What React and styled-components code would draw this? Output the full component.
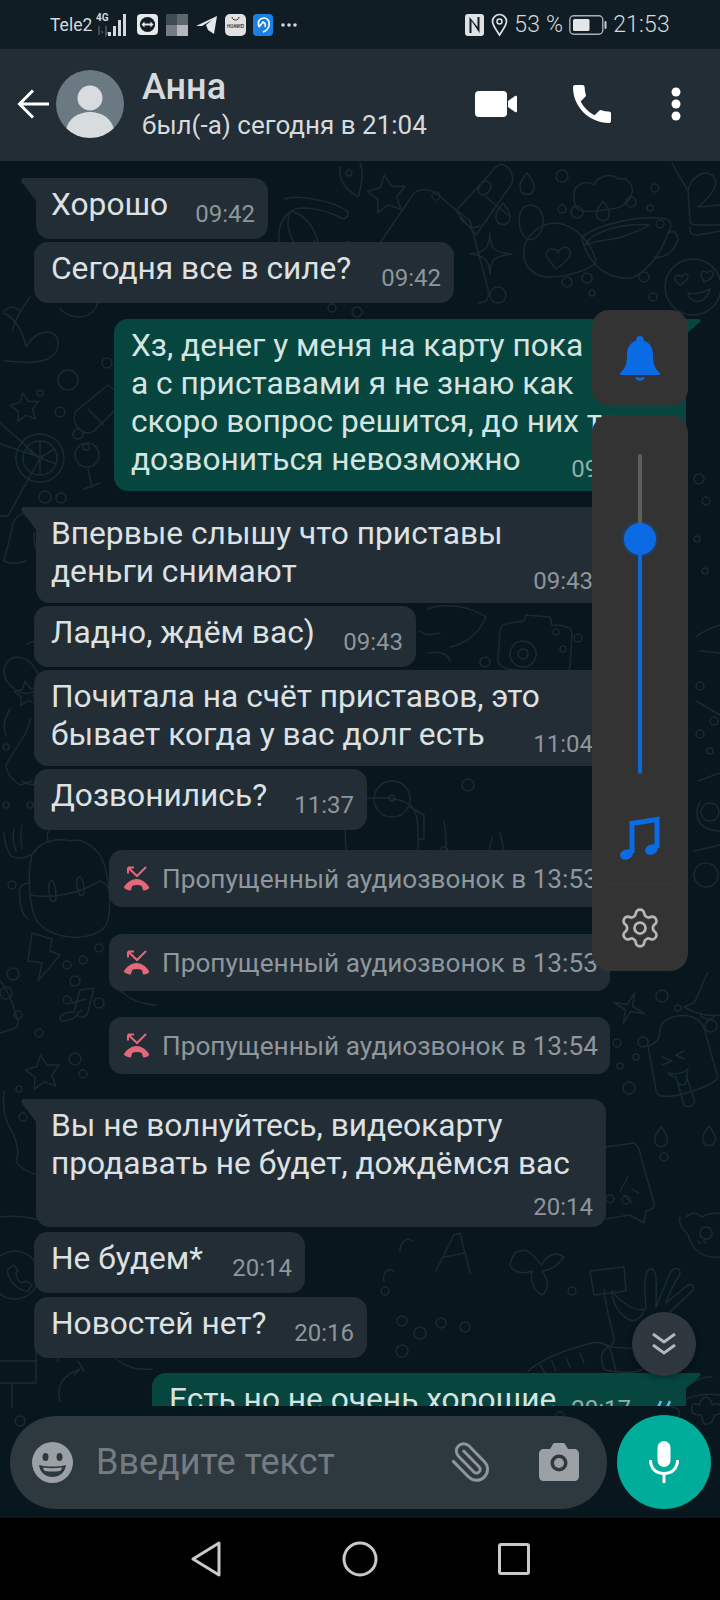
import React from 'react';
import styled, { createGlobalStyle } from 'styled-components';
import { Settings, Paperclip } from 'lucide-react';

const Global = createGlobalStyle`
	html, body {
		margin: 0;
		padding: 0;
		background: #000;
	}
	body {
		font-family: Roboto, "Noto Sans", sans-serif;
	}
`;

const Screen = styled.div`
	display: flex;
	flex-direction: column;
	width: 720px;
	height: 1600px;
	overflow: hidden;
`;

const StatusBar = styled.div`
	display: flex;
	align-items: center;
	justify-content: space-between;
	box-sizing: border-box;
	height: 49px;
	padding: 0 50px;
	background: #111d24;
	color: #d5d9db;
`;

const StatusGroup = styled.div`
	display: flex;
	align-items: center;
	gap: ${ props => props.$gap || 7 }px;
`;

const Carrier = styled.span`
	font-size: 17.5px;
	margin-right: -3px;
`;

const StatusText = styled.span`
	font-size: ${ props => props.$size || 23 }px;
	font-weight: 300;
	letter-spacing: 0.2px;
`;

const Mosaic = styled.div`
	display: grid;
	grid-template-columns: 1fr 1fr;
	width: 22px;
	height: 22px;
	margin: 0 1px;
`;

const MosaicCell = styled.div`
	background: ${ props => props.$color };
`;

const Header = styled.div`
	display: flex;
	align-items: center;
	box-sizing: border-box;
	height: 112px;
	padding: 0 0 2px 17px;
	background: #222d35;
	position: relative;
	z-index: 2;
`;

const Avatar = styled.div`
	flex: none;
	width: 68px;
	height: 68px;
	margin-left: 7px;
	border-radius: 50%;
	overflow: hidden;
`;

const Contact = styled.div`
	display: flex;
	flex-direction: column;
	gap: 4px;
	margin-left: 18px;
	flex: 1;
`;

const Name = styled.div`
	font-size: 36px;
	line-height: 38px;
	font-weight: 500;
	color: #d7dadc;
`;

const LastSeen = styled.div`
	font-size: 26px;
	line-height: 30px;
	color: #d7dadc;
`;

const HeaderActions = styled.div`
	display: flex;
	align-items: center;
	margin-right: 39px;
`;

const Chat = styled.div`
	position: relative;
	flex: 1;
	display: flex;
	flex-direction: column;
	min-height: 0;
	background: #08161e;
`;

const Wallpaper = styled.svg`
	position: absolute;
	left: 0;
	top: 0;
	fill: none;
	stroke: #1a2a33;
	stroke-width: 1.5;
	stroke-linecap: round;
	stroke-linejoin: round;
`;

const Messages = styled.div`
	position: relative;
	display: flex;
	flex-direction: column;
	box-sizing: border-box;
	height: 1246px;
	padding-top: 17px;
	overflow: hidden;
`;

const Bubble = styled.div`
	position: relative;
	flex: none;
	display: flow-root;
	box-sizing: border-box;
	width: ${ props => props.$width }px;
	min-height: 61px;
	margin-top: ${ props => props.$gap || 0 }px;
	margin-left: ${ props => props.$out ? 720 - 34 - props.$width : props.$tail ? 36 : 34 }px;
	padding: 8px ${ props => props.$out ? 15 : 13 }px 11px ${ props => props.$out || !props.$tail ? 17 : 15 }px;
	border-radius: ${ props => props.$tail ? '0 14px 14px 14px' : '14px' };
	border-top-right-radius: ${ props => props.$out ? 0 : '14px' };
	background: ${ props => props.$out ? '#07453f' : '#222d35' };
	color: ${ props => props.$out ? '#d6e4e1' : '#dde1e3' };
	font-size: 31.7px;
	line-height: 38px;

	&::before {
		content: '';
		display: ${ props => props.$tail || props.$out ? 'block' : 'none' };
		position: absolute;
		top: 0;
		width: 16px;
		left: ${ props => props.$out ? 'auto' : '-15px' };
		right: ${ props => props.$out ? '-15px' : 'auto' };
		height: ${ props => props.$out ? 16 : 24 }px;
		background: inherit;
		clip-path: ${ props => props.$out
			? 'polygon(0 0, 90% 0, 100% 14%, 0 100%)'
			: 'polygon(8% 0, 100% 0, 100% 100%, 0 14%)' };
	}
`;

const Time = styled.span`
	float: right;
	clear: ${ props => props.$ownLine ? 'both' : 'none' };
	display: flex;
	align-items: center;
	gap: 20px;
	margin: ${ props => props.$ownLine ? 11 : 15 }px 0 ${ props => props.$ownLine ? -4 : -2 }px 0;
	font-size: 24px;
	line-height: 26px;
	color: ${ props => props.$out ? '#8fb0ab' : '#8e969b' };
`;

const CallNotice = styled.div`
	flex: none;
	display: flex;
	align-items: center;
	gap: 12px;
	box-sizing: border-box;
	width: 501px;
	height: 57px;
	margin: ${ props => props.$gap }px 0 0 109px;
	padding-left: 14px;
	border-radius: 13px;
	background: #222d35;
	color: #8f979c;
	font-size: 26.2px;
`;

const Composer = styled.div`
	display: flex;
	align-items: center;
	gap: 10px;
	position: relative;
	margin: 9px 9px 9px 10px;
`;

const InputPill = styled.div`
	flex: 1;
	display: flex;
	align-items: center;
	box-sizing: border-box;
	height: 93px;
	padding: 0 28px 0 22px;
	border-radius: 47px;
	background: #2e383f;
`;

const Placeholder = styled.div`
	flex: 1;
	margin-left: 23px;
	font-size: 36px;
	color: #747c81;
`;

const ClipIcon = styled(Paperclip)`
	transform: scaleX(-1);
	margin-right: 46px;
`;

const MicButton = styled.div`
	flex: none;
	display: flex;
	align-items: center;
	justify-content: center;
	width: 94px;
	height: 94px;
	border-radius: 50%;
	background: #00ad9b;
`;

const NavBar = styled.div`
	display: flex;
	align-items: center;
	justify-content: center;
	gap: 120px;
	flex: none;
	height: 82px;
	padding-bottom: 0;
	background: #000;
`;

const VolumePanel = styled.div`
	position: absolute;
	left: 592px;
	top: 149px;
	display: flex;
	flex-direction: column;
	gap: 9px;
	width: 96px;
`;

const BellCard = styled.div`
	display: flex;
	align-items: center;
	justify-content: center;
	height: 96px;
	border-radius: 17px;
	background: #333333;
`;

const SliderCard = styled.div`
	display: flex;
	flex-direction: column;
	align-items: center;
	box-sizing: border-box;
	height: 556px;
	padding-top: 39px;
	border-radius: 18px;
	background: #333333;
`;

const SliderTrack = styled.div`
	position: relative;
	width: 4px;
	height: 320px;
	border-radius: 2px;
	background: linear-gradient(#5e5e5e 0 85px, #0f67d8 85px);
`;

const SliderThumb = styled.div`
	position: absolute;
	left: -14px;
	top: 69px;
	width: 32px;
	height: 32px;
	border-radius: 50%;
	background: #0a6be4;
	box-shadow: 0 0 4px rgba(10, 107, 228, 0.6);
`;

const SoundRow = styled.div`
	display: flex;
	justify-content: center;
	margin-top: 41px;
	width: 100%;
`;

const Divider = styled.div`
	width: 64px;
	height: 1px;
	margin-top: 22px;
	background: #383838;
`;

const SettingsRow = styled.div`
	display: flex;
	justify-content: center;
	margin-top: 22px;
`;

const ScrollDown = styled.div`
	position: absolute;
	left: 632px;
	top: 1151px;
	display: flex;
	align-items: center;
	justify-content: center;
	width: 64px;
	height: 64px;
	border-radius: 50%;
	background: #2e373e;
	box-shadow: 0 2px 6px rgba(0, 0, 0, 0.35);
`;

const rings = [
	[ 562, 15, 6 ], [ 436, 35, 4 ], [ 562, 48, 4 ], [ 577, 51, 6 ], [ 631, 41, 5 ], [ 655, 27, 4 ], [ 650, 47, 3 ], [ 660, 63, 4 ],
	[ 567, 121, 5 ], [ 587, 117, 5 ], [ 644, 116, 5 ], [ 592, 132, 3 ], [ 653, 136, 4 ], [ 498, 134, 8 ], [ 332, 147, 4 ], [ 357, 151, 5 ],
	[ 68, 219, 10 ], [ 40, 232, 3 ], [ 60, 251, 5 ], [ 78, 273, 5 ], [ 45, 336, 6 ], [ 61, 337, 5 ], [ 107, 202, 5 ],
	[ 6, 586, 3 ], [ 6, 644, 3 ], [ 30, 644, 3 ], [ 12, 724, 4 ], [ 99, 787, 4 ], [ 13, 813, 6 ], [ 6, 832, 6 ], [ 67, 804, 4 ], [ 83, 799, 4 ],
	[ 75, 820, 5 ], [ 67, 839, 4 ], [ 99, 842, 5 ], [ 18, 854, 4 ], [ 39, 872, 4 ], [ 75, 898, 6 ], [ 83, 913, 4 ], [ 19, 928, 3 ], [ 23, 956, 4 ],
	[ 662, 835, 6 ], [ 678, 847, 3 ], [ 711, 865, 6 ], [ 617, 882, 4 ], [ 643, 881, 5 ], [ 636, 896, 3 ], [ 620, 905, 3 ], [ 629, 927, 6 ],
	[ 664, 996, 4 ], [ 610, 1038, 4 ], [ 626, 1039, 4 ], [ 485, 501, 5 ], [ 578, 477, 4 ], [ 563, 488, 3 ], [ 468, 624, 6 ],
	[ 699, 318, 5 ], [ 706, 340, 4 ], [ 697, 378, 3 ], [ 705, 410, 3 ], [ 700, 525, 4 ], [ 714, 560, 4 ], [ 700, 573, 4 ], [ 710, 590, 3 ],
	[ 385, 1130, 4 ], [ 420, 1172, 6 ], [ 441, 1162, 5 ], [ 402, 1160, 5 ], [ 465, 1166, 5 ], [ 572, 1130, 4 ], [ 402, 1190, 6 ],
	[ 110, 1175, 4 ], [ 622, 688, 4 ], [ 444, 690, 4 ], [ 520, 695, 3 ], [ 20, 1260, 5 ], [ 560, 1255, 4 ],
];

const star = ( cx, cy, r, inner = 0.5, n = 5, rot = -8 ) => {
	const pts = [];
	for ( let i = 0; i < n * 2; i++ ) {
		const a = ( rot - 90 + i * 180 / n ) * Math.PI / 180;
		const d = i % 2 ? r * inner : r;
		pts.push( `${ ( cx + d * Math.cos( a ) ).toFixed( 1 ) },${ ( cy + d * Math.sin( a ) ).toFixed( 1 ) }` );
	}
	return pts.join( ' ' );
};

const drop = ( x, y, h = 22 ) => `M${ x } ${ y }c${ h * .3 } ${ h * .4 } ${ h * .36 } ${ h * .55 } ${ h * .3 } ${ h * .75 }c-${ h * .08 } ${ h * .3 }-${ h * .52 } ${ h * .3 }-${ h * .6 } 0c-${ h * .06 }-${ h * .2 } 0-${ h * .35 } ${ h * .3 }-${ h * .75 }z`;

const doodles = [
	// sunglasses
	'M285 38c10-4 45 0 62 12 3 5-2 9-6 7-18-10-40-12-48-8-8 3-7 30 8 38 8 4 12 0 14-8M292 50c-10 5-16 20-12 32 6 14 30 26 38 14 4-12-4-38-26-46zM346 85c0-7 8-5 8 3 0 14-2 30-6 44M318 96c10 8 18 18 22 36',
	// pin
	'M340 6c-2 14 6 22 18 30 4-12 6-24 2-34M349 9a3 3 0 1 0 .1 0',
	// envelope behind second bubble
	'M380 82l34-50c8-6 16-4 24 2l32 26M470 60l18 68c2 10-2 14-10 14',
	// bottle
	'M456 50l40-44c6-6 14 0 16 8 2 6 0 10-4 14l-32 46-20-24zM460 52c-4 6 14 20 20 12M486 36l22 18M480 24c4-6 8-4 10-2 2 4 0 10-6 12-6 0-7-5-4-10z',
	drop( 527, 12, 22 ), drop( 503, 42, 22 ), drop( 603, 40, 20 ),
	'M530 44c10 0 16 12 12 24-4 10-14 16-20 4-6-12-2-28 8-28z',
	// cloud
	'M574 36c-2-12 12-18 20-12 4-10 18-12 24-6 8-2 16 4 14 14-2 10-12 16-22 16-12 2-28 4-32 0-4-2-4-8-4-12z',
	// coffee cup
	'M582 76c18-14 60-22 84-18 6 2 6 8 2 14-6 18-18 36-34 44-12 4-30-2-40-14-6-8-12-18-12-26zM585 84c14-6 30-4 42-10 10-4 18-6 22-10M585 84c8-16 44-22 64-20M668 72c8-4 12 4 8 12-4 8-14 14-22 12',
	// star 4
	'M490 72c0 14 2 20 22 21-18 2-22 6-22 20-1-14-4-18-20-20 16-1 19-7 20-21z',
	// bubble with heart
	'M556 62c-16 0-30 12-32 26-2 14 6 26 22 28 16 1 42-6 50-14-2-16-18-38-40-40zM550 100c-6-6-4-12 2-12 4 0 6 2 6 4 2-6 10-8 12-2 2 6-8 14-14 18-2-2-4-6-6-8z',
	// emoji
	'M693 98a28 28 0 1 0 .1 0M676 120c-4-4 2-8 6-4 1-4 6-4 6 0 0 4-6 6-8 8zM702 116c-3-4 2-8 5-4 2-4 7-2 6 2-1 4-6 6-9 7zM688 132c6 2 14 0 22-4-2 8-8 14-14 12-4 0-8-4-8-8z',
	// digit block
	'M672 2c4 8 12 20 16 28l2 30c0 4 4 4 10 4h20M688 30c4-20 26-24 28-8 0 6-10 18-18 24l22-2M690 66c0 8 2 8 8 8l22-4',
	// cherry heart left
	'M4 200c14 0 30 4 44-2 14-8 12-22 4-26-10-4-20 4-26 14-4-20-14-30-22-34M20 150c-6-6-12-4-16 0M60 148c10 10 28 12 36-2 6-10-4-26-14-30M58 128c6-2 20 0 16 10M12 170c4-14 12-26 18-34',
	// lemon + drink
	'M40 273a24 24 0 1 1-.1 0zM40 280a17 17 0 1 1-.1 0zM40 297l0 -17M40 297l14 -9M40 297l16 6M40 297l0 17M40 297l-14 -9M0 262l40 35-32 58H0M-2 282l44 15',
	star( 25, 247, 15 ),
	// wine glass
	'M87 282a12 12 0 1 0 .1 0zM86 283a3 3 0 1 0 .1 0zM88 308l4 18M84 328l16-6',
	// bottle top
	'M76 250l32-26 18 14-32 32c-6 4-12 2-18-6-2-4-2-10 0-14zM88 248l16 16',
	// leaf + hand shapes left side
	'M12 368c0-10 8-16 16-16l16 4c6 0 4 6 0 8M12 368l-8 32c8 4 16 2 22 0M34 372c0 6 0 14 4 20M18 496c-8 0-14 6-14 14 0 10 8 18 18 22 10 2 18-4 16-10 2-10-6-24-20-26zM26 484c8-6 14-4 18 2M10 548c-6 10-8 18-4 26M30 558c-2 16-16 30-24 46 0 10 8 16 14 20l12-4M22 620c10 6 22 4 30 0',
	star( 27, 533, 13 ),
	// backpack
	'M32 694c-4 14-4 40 2 60 4 12 18 20 36 22 16 2 34-4 38-16 4-22 0-52-8-66-8-10-20-18-30-14-16-4-32 2-38 14zM30 734c24 4 50-2 70-14M52 720c-4 0 -4 8 -2 16 0 6 6 6 6 0 0-8-2-16-4-16zM80 716c-4 0-4 8-2 14 2 6 6 6 6 0 0-8-2-14-4-14zM30 722c-8 0-12 4-10 14 0 8 2 18 8 22M100 720c6 2 10 6 10 14M48 680c-4-12 8-18 16-14M4 672c0 8 4 18 6 22 8 6 20 2 26-4M14 668c-2 10 0 16 2 22M22 664c-2 8-1 16 0 24',
	// bolt + note + star
	'M32 772l20 6-2 12 10 4-22 26 4-18-14-2z',
	'M78 852c-2 6-10 8-16 8-4-2-2-6 4-8l8-1 6-22 14-2-6 24c-2 6-8 6-10 4-2-2 0-4 4-6M72 842l14-4',
	star( 43, 912, 18 ),
	'M0 820c6 6 12 20 18 40 0 6-2 8-6 8l-12 4M4 930c-2 20 2 32 8 40 4 8 8 22 4 30 4 8 14 12 22 14M0 1056c14-2 30 0 44 4',
	// whatsapp ring
	'M15 1090a24 24 0 1 1-.1 0M8 1108c-2 8 8 22 20 22l4-6-6-4-4 2c-4-2-6-6-6-10l2-2-4-6z',
	// popsicle
	'M648 885c8-2 12-8 12-14 0-10 6-12 10-14 18-6 30 0 34 10l14 50c-6 8-40 20-56 18-4 0-6-4-6-6zM676 916l8 28c6 4 12 0 10-6l-8-24M662 896l10 4-10 4M684 890l-8 4 8 4M668 912c8 2 16 0 20-4-2 6 0 14-4 16-4 0-8-2-8-8-4 0-6-2-8-4',
	drop( 661, 966, 20 ), drop( 709, 965, 20 ),
	// rocket near right of bubble
	'M606 986l28-4c6 4 6 10 8 18l12 42c2 6-4 6-8 8l-2 12-14-8-24 4M624 1034l8 8M632 1028l6 4M620 1030l8-14',
	star( 629, 847, 16, 0.25, 4, 20 ),
	// bell upper right
	'M708 812c-4 4-8 20-14 30l-10 4c10 6 24 10 36 8M700 852c2 6 8 8 14 4',
	// bear
	'M680 1056c-2 10 6 14 8 18 4 14 14 24 32 22M686 1056c6-6 12-4 16 0 6-4 12-4 18-4M706 1066a6 6 0 1 0 .1 0zM698 1080l2 2M704 1080l2 2',
	// hand
	'M604 1128c2 20 8 40 10 50 0 6-4 8-6 6M610 1186c-6 2-10 6-8 14 0 6 2 10 8 10 14 2 30 2 36-4 4-6 0-16-6-18l-30-2zM640 1188c14-24 38-44 52-58 4-4 0-8-4-6l-22 18c4-14 12-24 14-30 0-6-6-6-10 0-4 10-10 24-14 34 0-18 2-36-4-38-8-2-8 16-6 40M612 1130c6 8 22 22 32 18-2 10-10 14-16 10-8-4-16-16-16-28z',
	// gamepad
	'M668 1240c12-10 30-26 44-24M692 1246c-2 8 6 8 10 8 0 6 2 12 8 8 4-2 4-6 4-8 6 0 10-4 6-10-2-2-4-2-8 0 0-6-6-10-10-6-2 2-2 4-2 6-4-2-8-2-8 2z',
	// tag digits, bottom
	'M528 1210c14-12 40-22 64-28 12-2 18 4 20 12l4 16M540 1204l6 10M552 1200l4 10M566 1196l4 10M580 1192l4 10',
	'M620 1228c14-2 26 6 34 14 8 4 18 2 24 6 4 8-4 14-14 14M686 1238c10-4 20-6 34-4',
	// camera
	'M500 470c2-6 4-8 10-8l14-2 2-6 24 2 2 8c12 0 20 2 20 8l-2 34c-2 6-4 8-10 8l-52-6c-6-2-10-4-10-10zM523 480a13 13 0 1 0 .1 0zM523 488a5 5 0 1 0 .1 0zM556 468a3 3 0 1 0 .1 0',
	// turntable
	'M350 640c18-4 46-6 60 4 12 8 8 50 6 60-4 10-50 10-60 6-12-6-14-50-6-70zM392 620a18 18 0 1 0 .1 0M392 634a3 3 0 1 0 .1 0zM410 646l14 8v24l-6 0',
	// shoes / plectrum near 09:43
	'M428 448c14-6 40-4 58 8-6 14-18 26-36 30M420 470c4 4 12 4 20 2M428 492c10-2 20 0 22 8M444 660c4 18 0 34 4 50 2 12 16 20 32 16M500 672c4 16 8 30 2 40M492 676c-4 18-4 36 0 48',
	// right edge shapes
	'M696 476c6-6 24-12 24-12M700 490l20 2M696 540c8 4 16 10 24 14M698 620l22-8M700 640c-8 16 0 30 20 30M710 642a9 9 0 1 0 .1 0zM694 690l26-6M706 702a12 12 0 1 0 .1 0z',
	// letters + shapes, middle bottom
	'M436 1110l18 -36 6 -2 10 40M444 1096l20 -4M520 1090c10-4 16 10 22 14 4-10 14-14 22-8-6 8-14 14-22 14 6 8 8 18 0 24-8-4-12-14-10-24-10 4-20 0-22-6 2-10 6-14 10-14zM400 1090c0-10 8-14 12-10M384 1120c-2-8 4-14 10-10M590 1110l34-4 2 24-32 4z',
	// lines right of Дозвонились
	'M372 800c14-8 30-12 52-4M372 822c22 4 44 0 70-8M476 810l44 4M478 826l44-4',
	'M150 800c0 6 2 12 6 16M120 830c10 8 22 14 36 14',
	// left-bottom checker
	'M0 1200h36v22h-36M36 1200v-22h22v22M12 1222v24M60 1240c-4-14 2-26 20-32l-6 6M78 1200l6 10',
	'M120 1176l30 4M108 1188c8 14 24 22 44 20',
];

const Doodles = () => (
	<Wallpaper width="720" height="1357" viewBox="0 0 720 1357">
		{ doodles.map( ( d, i ) => d.startsWith( 'M' )
			? <path key={ i } d={ d } />
			: <polygon key={ i } points={ d } /> ) }
		<polygon points={ star( 387, 34, 20 ) } />
		{ rings.map( ( [ x, y, r ], i ) => <circle key={ i } cx={ x } cy={ y } r={ r } /> ) }
	</Wallpaper>
);

const Signal = () => (
	<svg width="34" height="28" viewBox="0 0 34 28">
		<text x="0" y="10" fontFamily="Roboto" fontWeight="700" fontSize="10" fill="#d5d9db">4G</text>
		<path d="M3 15v9M7 22l-2-2M10 15v9l2-3" stroke="#4d585e" strokeWidth="1.5" fill="none" />
		<rect x="12" y="21" width="3" height="4" fill="#d5d9db" />
		<rect x="17" y="15" width="3" height="10" fill="#d5d9db" />
		<rect x="22" y="9" width="3" height="16" fill="#d5d9db" />
		<rect x="27" y="3" width="3" height="22" fill="#d5d9db" />
	</svg>
);

const TeamViewer = () => (
	<svg width="21" height="21" viewBox="0 0 21 21">
		<rect width="21" height="21" rx="4" fill="#e6e8e9" />
		<circle cx="10.5" cy="10.5" r="7.6" fill="#111d24" />
		<path d="M4.5 10.5l3-3v2h6v-2l3 3-3 3v-2h-6v2z" fill="#e6e8e9" />
	</svg>
);

const Telegram = () => (
	<svg width="22" height="20" viewBox="0 0 22 20">
		<path d="M0 11L21 1l-3 18-6-4-2-5 6-5-10 6z" fill="#e6e8e9" />
	</svg>
);

const HuaweiBag = () => (
	<svg width="21" height="22" viewBox="0 0 21 22">
		<rect width="21" height="22" rx="5" fill="#dfe1e2" />
		<path d="M7 3c0 4 7 4 7 0" stroke="#333" fill="none" />
		<text x="10.5" y="14" textAnchor="middle" fontFamily="Roboto" fontWeight="700" fontSize="4.6" fill="#444">HUAWEI</text>
	</svg>
);

const BlueApp = () => (
	<svg width="20" height="22" viewBox="0 0 20 22">
		<rect width="20" height="22" rx="4" fill="#1b80e4" />
		<path d="M6 13c-2-6 1-9 5-9 4 0 6 4 5 8-1 3-3 5-6 6M6 13l4-5c2 1 3 3 2 5" stroke="#fff" strokeWidth="1.6" fill="none" />
	</svg>
);

const Dots = () => (
	<svg width="18" height="6" viewBox="0 0 18 6">
		<circle cx="3" cy="3" r="1.8" fill="#d5d9db" />
		<circle cx="9" cy="3" r="1.8" fill="#d5d9db" />
		<circle cx="15" cy="3" r="1.8" fill="#d5d9db" />
	</svg>
);

const Nfc = () => (
	<svg width="21" height="24" viewBox="0 0 21 24">
		<rect x="1" y="1" width="19" height="22" rx="3" fill="#dfe2e3" />
		<path d="M5.500 4v16h2V8l8 12V4h-2v10z" fill="#111d24" />
	</svg>
);

const Pin = () => (
	<svg width="17" height="24" viewBox="0 0 17 24">
		<path d="M8.5 22C4 15 1.5 12 1.5 8.5a7 7 0 0 1 14 0C15.500 12 13 15 8.500 22z" stroke="#dfe2e3" strokeWidth="1.7" fill="none" />
		<circle cx="8.500" cy="8.500" r="2.500" stroke="#dfe2e3" strokeWidth="1.500" fill="none" />
	</svg>
);

const Battery = () => (
	<svg width="38" height="20" viewBox="0 0 38 20">
		<rect x="0.800" y="0.800" width="33" height="18.400" rx="4" stroke="#aab0b3" strokeWidth="1.400" fill="none" />
		<rect x="4" y="4" width="16.500" height="12" rx="1.500" fill="#e4e6e7" />
		<rect x="35.500" y="6" width="2" height="8" rx="1" fill="#c7cbcd" />
	</svg>
);

const BackArrow = () => (
	<svg width="32" height="30" viewBox="0 0 32 30">
		<path d="M32 15H3M16 1.500L2.500 15 16 28.500" stroke="#fff" strokeWidth="3" fill="none" />
	</svg>
);

const AvatarImage = () => (
	<svg width="68" height="68" viewBox="0 0 68 68">
		<rect width="68" height="68" fill="#6b7a82" />
		<circle cx="34" cy="28" r="12.500" fill="#d8dcde" />
		<path d="M10 60c2-12 13-18 24-18s22 6 24 18c-6 5-15 8-24 8s-18-3-24-8z" fill="#d8dcde" />
	</svg>
);

const VideoIcon = () => (
	<svg width="42" height="26" viewBox="0 0 42 26">
		<rect x="0" y="0" width="32" height="26" rx="4" fill="#fff" />
		<path d="M33 10l7-5c1-.6 2 0 2 1v14c0 1-1 1.600-2 1l-7-5z" fill="#fff" />
	</svg>
);

const PhoneIcon = () => (
	<svg width="38" height="38" viewBox="3 3 18 18">
		<path d="M6.620 10.790c1.440 2.830 3.760 5.140 6.590 6.590l2.200-2.200c.27-.27.67-.36 1.020-.24 1.120.37 2.330.57 3.570.57.55 0 1 .45 1 1V20c0 .55-.45 1-1 1-9.390 0-17-7.610-17-17 0-.55.45-1 1-1h3.500c.55 0 1 .45 1 1 0 1.250.2 2.450.57 3.570.11.35.03.74-.25 1.020l-2.200 2.200z" fill="#fff" />
	</svg>
);

const MoreIcon = () => (
	<svg width="10" height="34" viewBox="0 0 10 34">
		<circle cx="5" cy="5" r="4.500" fill="#fff" />
		<circle cx="5" cy="17" r="4.500" fill="#fff" />
		<circle cx="5" cy="29" r="4.500" fill="#fff" />
	</svg>
);

const Spacer = styled.div`
	width: ${ props => props.$width }px;
`;

const MissedIcon = () => (
	<svg width="27" height="26" viewBox="0 0 27 26">
		<path d="M1 21c3-5 8-8 12.500-8S23 16 26 21c.5 1-.5 2-1.500 2.500l-3 1c-1 .3-1.500-.3-1.700-1l-1-3.500c-3-1.500-6.600-1.500-9.600 0l-1 3.500c-.2.700-.7 1.300-1.700 1l-3-1C2.500 23 .5 22 1 21z" fill="#e2697b" />
		<path d="M5 1.500l9 8.500L23 1M5 1.500h6M5 1.500v6" stroke="#e2697b" strokeWidth="2" fill="none" />
	</svg>
);

const Ticks = () => (
	<svg width="20" height="26" viewBox="0 0 20 26">
		<path d="M1 25L10 5M10 25L19 5" stroke="#53bdeb" strokeWidth="2.600" fill="none" />
	</svg>
);

const BellIcon = () => (
	<svg width="40" height="46" viewBox="0 0 40 46">
		<path d="M20 1c2.200 0 3.800 1.500 3.800 3.500v1.200C30 7.500 33 13 33 20c0 8 1 12 7 18.500V40H0v-1.500C6 32 7 28 7 20c0-7 3-12.500 9.200-14.300V4.500C16.200 2.500 17.800 1 20 1z" fill="#0a6be4" />
		<path d="M15 42.500h10c-.5 2-2.500 3.200-5 3.200s-4.500-1.200-5-3.200z" fill="#0a6be4" />
	</svg>
);

const NoteIcon = () => (
	<svg width="40" height="46" viewBox="0 0 40 46">
		<path d="M12 38V8.500L37 4.500V33" stroke="#0a6be4" strokeWidth="5" fill="none" />
		<ellipse cx="6.500" cy="39.500" rx="6.500" ry="5" transform="rotate(-20 6.500 39.500)" fill="#0a6be4" />
		<ellipse cx="31.500" cy="34.500" rx="6.500" ry="5" transform="rotate(-20 31.500 34.500)" fill="#0a6be4" />
	</svg>
);

const ChevronsIcon = () => (
	<svg width="26" height="24" viewBox="0 0 26 24">
		<path d="M2 2l11 8 11-8M2 13l11 8 11-8" stroke="#b4b8ba" strokeWidth="2.800" fill="none" />
	</svg>
);

const SmileIcon = () => (
	<svg width="41" height="41" viewBox="0 0 41 41">
		<circle cx="20.500" cy="20.500" r="20.500" fill="#9aa0a4" />
		<ellipse cx="13.500" cy="15" rx="3" ry="4" fill="#2e383f" />
		<ellipse cx="27.500" cy="15" rx="3" ry="4" fill="#2e383f" />
		<path d="M7 23c8 2 19 2 27 0-1 8-7 12-13.500 12S8 31 7 23z" fill="#2e383f" />
		<path d="M11 25.500c6 1 13 1 19 0-.5 2-1 3-2 3.500-5 .8-10 .8-15 0-1-.5-1.500-1.500-2-3.500z" fill="#9aa0a4" />
	</svg>
);

const CameraIcon = () => (
	<svg width="40" height="38" viewBox="0 0 40 38">
		<path d="M5 6h6l3-5c.5-.6 1-1 2-1h8c1 0 1.500.4 2 1l3 5h6c3 0 5 2 5 5v22c0 3-2 5-5 5H5c-3 0-5-2-5-5V11c0-3 2-5 5-5z" fill="#9aa0a4" />
		<circle cx="20" cy="20" r="8.500" fill="#2e383f" />
		<circle cx="20" cy="20" r="5" fill="#9aa0a4" />
	</svg>
);

const MicIcon = () => (
	<svg width="30" height="42" viewBox="0 0 30 42">
		<rect x="8.500" y="0" width="13" height="26" rx="6.500" fill="#fff" />
		<path d="M1.500 19c0 9 6 13.500 13.500 13.500S28.500 28 28.500 19M15 32v10" stroke="#fff" strokeWidth="3" fill="none" />
	</svg>
);

const NavBack = () => (
	<svg width="32" height="36" viewBox="0 0 32 36">
		<path d="M29 2L3 18l26 16z" stroke="#c9c9c9" strokeWidth="3" strokeLinejoin="round" fill="none" />
	</svg>
);

const NavHome = () => (
	<svg width="36" height="36" viewBox="0 0 36 36">
		<circle cx="18" cy="18" r="16" stroke="#c9c9c9" strokeWidth="3" fill="none" />
	</svg>
);

const NavRecent = () => (
	<svg width="32" height="32" viewBox="0 0 32 32">
		<rect x="1.500" y="1.500" width="29" height="29" rx="1.500" stroke="#c9c9c9" strokeWidth="3" fill="none" />
	</svg>
);

const MissedCall = ( { gap, time } ) => (
	<CallNotice $gap={ gap }>
		<MissedIcon />
		Пропущенный аудиозвонок в { time }
	</CallNotice>
);

export default function App() {
	return (
		<Screen>
			<Global />
			<StatusBar>
				<StatusGroup>
					<Carrier>Tele2</Carrier>
					<Signal />
					<TeamViewer />
					<Mosaic>
						<MosaicCell $color="#3f4b52" />
						<MosaicCell $color="#5d676c" />
						<MosaicCell $color="#767c80" />
						<MosaicCell $color="#b5b8ba" />
					</Mosaic>
					<Telegram />
					<HuaweiBag />
					<BlueApp />
					<Dots />
				</StatusGroup>
				<StatusGroup $gap={ 6 }>
					<Nfc />
					<Pin />
					<StatusText>53 %</StatusText>
					<Battery />
					<StatusText>21:53</StatusText>
				</StatusGroup>
			</StatusBar>

			<Header>
				<BackArrow />
				<Avatar><AvatarImage /></Avatar>
				<Contact>
					<Name>Анна</Name>
					<LastSeen>был(-а) сегодня в 21:04</LastSeen>
				</Contact>
				<HeaderActions>
					<VideoIcon />
					<Spacer $width={ 56 } />
					<PhoneIcon />
					<Spacer $width={ 60 } />
					<MoreIcon />
				</HeaderActions>
			</Header>

			<Chat>
				<Doodles />
				<Messages>
					<Bubble $tail $width={ 232 }>Хорошо<Time>09:42</Time></Bubble>
					<Bubble $gap={ 3 } $width={ 420 }>Сегодня все в силе?<Time>09:42</Time></Bubble>
					<Bubble $out $gap={ 16 } $width={ 572 }>
						Хз, денег у меня на карту пока нет,<br />
						а с приставами я не знаю как<br />
						скоро вопрос решится, до них там<br />
						дозвониться невозможно
						<Time $out>09:43<Ticks /></Time>
					</Bubble>
					<Bubble $tail $gap={ 16 } $width={ 570 }>
						Впервые слышу что приставы<br />
						деньги снимают
						<Time>09:43</Time>
					</Bubble>
					<Bubble $gap={ 3 } $width={ 382 }>Ладно, ждём вас)<Time>09:43</Time></Bubble>
					<Bubble $gap={ 3 } $width={ 572 }>
						Почитала на счёт приставов, это<br />
						бывает когда у вас долг есть
						<Time>11:04</Time>
					</Bubble>
					<Bubble $gap={ 3 } $width={ 333 }>Дозвонились?<Time>11:37</Time></Bubble>
					<MissedCall gap={ 20 } time="13:53" />
					<MissedCall gap={ 27 } time="13:53" />
					<MissedCall gap={ 26 } time="13:54" />
					<Bubble $tail $gap={ 25 } $width={ 570 }>
						Вы не волнуйтесь, видеокарту<br />
						продавать не будет, дождёмся вас
						<Time $ownLine>20:14</Time>
					</Bubble>
					<Bubble $gap={ 5 } $width={ 271 }>Не будем*<Time>20:14</Time></Bubble>
					<Bubble $gap={ 4 } $width={ 333 }>Новостей нет?<Time>20:16</Time></Bubble>
					<Bubble $out $gap={ 15 } $width={ 534 }>
						Есть но не очень хорошие
						<Time $out>20:17<Ticks /></Time>
					</Bubble>
				</Messages>

				<Composer>
					<InputPill>
						<SmileIcon />
						<Placeholder>Введите текст</Placeholder>
						<ClipIcon size={ 44 } color="#8f969a" strokeWidth={ 1.6 } />
						<CameraIcon />
					</InputPill>
					<MicButton><MicIcon /></MicButton>
				</Composer>

				<VolumePanel>
					<BellCard><BellIcon /></BellCard>
					<SliderCard>
						<SliderTrack><SliderThumb /></SliderTrack>
						<SoundRow><NoteIcon /></SoundRow>
						<Divider />
						<SettingsRow><Settings size={ 44 } color="#b6b6b6" strokeWidth={ 1.5 } /></SettingsRow>
					</SliderCard>
				</VolumePanel>

				<ScrollDown><ChevronsIcon /></ScrollDown>
			</Chat>

			<NavBar>
				<NavBack />
				<NavHome />
				<NavRecent />
			</NavBar>
		</Screen>
	);
}
